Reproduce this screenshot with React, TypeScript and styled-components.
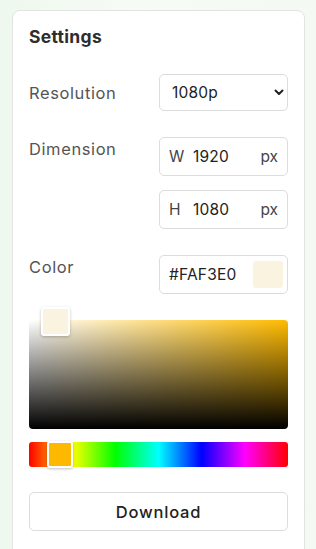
import React from "react";
import styled, { createGlobalStyle } from "styled-components";

const Global = createGlobalStyle`
  html, body { margin: 0; padding: 0; }
  body {
    background: linear-gradient(90deg, #eef8ee 0%, #f6fbf5 40%, #f4faf3 100%);
    font-family: Inter, "Open Sans", Arial, sans-serif;
    min-height: 549px;
  }
  * { box-sizing: border-box; }
`;

const Page = styled.div`
  padding: 10px 11px 0 12px;
`;

const Card = styled.div`
  background: #fff;
  border: 1px solid #e2e4e2;
  border-radius: 8px;
  padding: 15px 16px 30px 16px;
  min-height: 560px;
`;

const Title = styled.h2`
  margin: 0;
  font-size: 17.5px;
  font-weight: 700;
  color: #2d2d2d;
  line-height: 22px;
  letter-spacing: 0.3px;
`;

const Row = styled.div<{ $center?: boolean; $mt: number }>`
  display: grid;
  grid-template-columns: 130px 1fr;
  align-items: ${(p) => (p.$center ? "center" : "start")};
  margin-top: ${(p) => p.$mt}px;
`;

const Label = styled.div<{ $pt?: number }>`
  font-size: 16.5px;
  color: #555;
  padding-top: ${(p) => p.$pt ?? 0}px;
  letter-spacing: 0.6px;
`;

const Stack = styled.div`
  display: flex;
  flex-direction: column;
  gap: 14px;
`;

const Field = styled.div<{ $h: number; $pr?: number }>`
  position: relative;
  height: ${(p) => p.$h}px;
  border: 1px solid #dcdcdc;
  border-radius: 5px;
  display: flex;
  align-items: center;
  padding: 0 ${(p) => p.$pr ?? 9}px 0 9px;
  font-size: 15.5px;
  color: #222;
  background: #fff;
`;

const Select = styled.select`
  appearance: none;
  -webkit-appearance: none;
  width: 100%;
  height: 37px;
  border: 1px solid #dcdcdc;
  border-radius: 5px;
  background: #fff;
  padding: 0 0 0 12px;
  font-family: inherit;
  font-size: 15.5px;
  color: #222;
  outline: none;
  letter-spacing: 0.2px;
`;

const SelectWrap = styled.div`
  position: relative;
`;

const Chevron = styled.svg`
  position: absolute;
  right: 4px;
  top: 15px;
  pointer-events: none;
`;

const Prefix = styled.span`
  color: #444;
  width: 24px;
`;

const Value = styled.span`
  flex: 1;
  color: #222;
  letter-spacing: 0.2px;
`;

const Unit = styled.span`
  color: #444;
`;

const Swatch = styled.div<{ $c: string }>`
  width: 30px;
  height: 27px;
  border-radius: 3px;
  background: ${(p) => p.$c};
`;

const Saturation = styled.div<{ $hue: string }>`
  position: relative;
  margin-top: 26px;
  height: 109px;
  border-radius: 4px;
  background: linear-gradient(to top, #000, rgba(0, 0, 0, 0)),
    linear-gradient(to right, #fff, ${(p) => p.$hue});
`;

const SatHandle = styled.div<{ $c: string }>`
  position: absolute;
  width: 29px;
  height: 29px;
  left: 12px;
  top: -13px;
  border: 2px solid #fff;
  border-radius: 3px;
  background: ${(p) => p.$c};
  box-shadow: 0 1px 3px rgba(0, 0, 0, 0.25);
`;

const Hue = styled.div`
  position: relative;
  margin-top: 13px;
  height: 25px;
  border-radius: 3px;
  background: linear-gradient(
    to right,
    #ff0000 0%,
    #ffff00 16.66%,
    #00ff00 33.33%,
    #00ffff 50%,
    #0000ff 66.66%,
    #ff00ff 83.33%,
    #ff0000 100%
  );
`;

const HueHandle = styled.div<{ $c: string }>`
  position: absolute;
  left: 18px;
  top: -1px;
  width: 26px;
  height: 27px;
  border: 2px solid #fff;
  border-radius: 3px;
  background: ${(p) => p.$c};
  box-shadow: 0 1px 3px rgba(0, 0, 0, 0.25);
`;

const Button = styled.button`
  display: block;
  width: 100%;
  margin-top: 25px;
  height: 39px;
  border: 1px solid #dcdcdc;
  border-radius: 5px;
  background: #fff;
  font-family: inherit;
  font-size: 16.5px;
  font-weight: 500;
  color: #222;
  letter-spacing: 0.8px;
`;

export default function App() {
  return (
    <>
      <Global />
      <Page>
        <Card>
          <Title>Settings</Title>
          <Row $center $mt={26}>
            <Label>Resolution</Label>
            <SelectWrap>
              <Select defaultValue="1080p">
                <option>720p</option>
                <option>1080p</option>
                <option>4K</option>
              </Select>
              <Chevron width="10" height="7" viewBox="0 0 10 7">
                <path d="M1.5 1.5 L5 5 L8.5 1.5" fill="none" stroke="#222" strokeWidth="2" strokeLinecap="round" strokeLinejoin="round" />
              </Chevron>
            </SelectWrap>
          </Row>
          <Row $mt={26}>
            <Label $pt={2}>Dimension</Label>
            <Stack>
              <Field $h={39}>
                <Prefix>W</Prefix>
                <Value>1920</Value>
                <Unit>px</Unit>
              </Field>
              <Field $h={39}>
                <Prefix>H</Prefix>
                <Value>1080</Value>
                <Unit>px</Unit>
              </Field>
            </Stack>
          </Row>
          <Row $mt={26}>
            <Label $pt={2}>Color</Label>
            <Field $h={39} $pr={4}>
              <Value>#FAF3E0</Value>
              <Swatch $c="#FAF3E0" />
            </Field>
          </Row>
          <Saturation $hue="#ffbb00">
            <SatHandle $c="#FAF3E0" />
          </Saturation>
          <Hue>
            <HueHandle $c="#ffb800" />
          </Hue>
          <Button>Download</Button>
        </Card>
      </Page>
    </>
  );
}
